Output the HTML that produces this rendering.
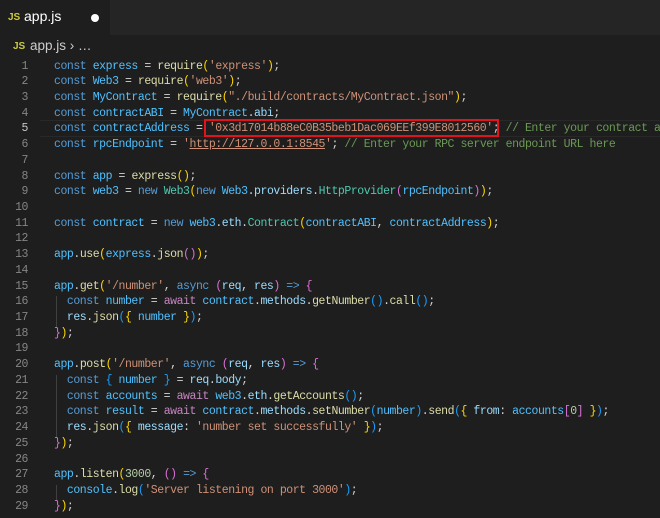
<!DOCTYPE html>
<html><head><style>
body{margin:0;width:660px;height:518px;background:#1e1e1e;overflow:hidden;font-family:"Liberation Sans",sans-serif;position:relative}
#wrap{position:absolute;left:0;top:0;width:660px;height:518px;overflow:hidden}
.tabs{position:absolute;left:0;top:0;width:660px;height:35px;background:#252526}
.tab{position:absolute;left:0;top:0;width:110px;height:35px;background:#1e1e1e}
.js{color:#cbcb41;font-weight:bold;font-size:10px;position:absolute}
.tt{color:#fff;font-size:14px;position:absolute}
.crumb{color:#ccc;font-size:13.5px;position:absolute}
.ln{position:absolute;left:0;width:28px;text-align:right;color:#858585;font-family:"Liberation Mono",monospace;font-size:11.5px;letter-spacing:-0.45px}
.ln.a{color:#c6c6c6}
.c{position:absolute;left:54px;white-space:pre;font-family:"Liberation Mono",monospace;font-size:11.5px;letter-spacing:-0.45px;color:#d4d4d4}
.k{color:#569cd6}.v{color:#4fc1ff}.p{color:#9cdcfe}.f{color:#dcdcaa}.s{color:#ce9178}.m{color:#6a9955}.n{color:#b5cea8}.w{color:#c586c0}.t{color:#4ec9b0}
.b1{color:#ffd700}.b2{color:#da70d6}.b3{color:#179fff}
.g{position:absolute;left:56px;width:1px;background:#404040}
</style></head><body><div id="wrap">
<div class="tabs"><div class="tab">
<span class="js" style="left:8px;top:12px">JS</span><span class="tt" style="left:24px;top:8px">app.js</span>
<div style="position:absolute;left:91px;top:14px;width:8px;height:8px;border-radius:50%;background:#fff"></div></div></div>
<span class="js" style="left:13px;top:41px">JS</span><span class="crumb" style="left:30px;top:38px">app.js &#8250; …</span>
<div style="position:absolute;left:40px;top:120px;width:620px;height:15px;border-top:1px solid #282828;border-bottom:1px solid #282828"></div>
<div id="code"></div>
<div style="position:absolute;left:204px;top:119px;width:295px;height:18px;border:2px solid #e0141e;box-sizing:border-box"></div>
</div>
<script>
var L=[
'<span class="k">const</span> <span class="v">express</span> = <span class="f">require</span><span class="b1">(</span><span class="s">\'express\'</span><span class="b1">)</span>;',
'<span class="k">const</span> <span class="v">Web3</span> = <span class="f">require</span><span class="b1">(</span><span class="s">\'web3\'</span><span class="b1">)</span>;',
'<span class="k">const</span> <span class="v">MyContract</span> = <span class="f">require</span><span class="b1">(</span><span class="s">"./build/contracts/MyContract.json"</span><span class="b1">)</span>;',
'<span class="k">const</span> <span class="v">contractABI</span> = <span class="v">MyContract</span>.<span class="p">abi</span>;',
'<span class="k">const</span> <span class="v">contractAddress</span> = <span class="s">\'0x3d17014b88eC0B35beb1Dac069EEf399E8012560\'</span>; <span class="m">// Enter your contract address here</span>',
'<span class="k">const</span> <span class="v">rpcEndpoint</span> = <span class="s">\'<u>http://127.0.0.1:8545</u>\'</span>; <span class="m">// Enter your RPC server endpoint URL here</span>',
'',
'<span class="k">const</span> <span class="v">app</span> = <span class="f">express</span><span class="b1">()</span>;',
'<span class="k">const</span> <span class="v">web3</span> = <span class="k">new</span> <span class="t">Web3</span><span class="b1">(</span><span class="k">new</span> <span class="v">Web3</span>.<span class="p">providers</span>.<span class="t">HttpProvider</span><span class="b2">(</span><span class="v">rpcEndpoint</span><span class="b2">)</span><span class="b1">)</span>;',
'',
'<span class="k">const</span> <span class="v">contract</span> = <span class="k">new</span> <span class="v">web3</span>.<span class="p">eth</span>.<span class="t">Contract</span><span class="b1">(</span><span class="v">contractABI</span>, <span class="v">contractAddress</span><span class="b1">)</span>;',
'',
'<span class="v">app</span>.<span class="f">use</span><span class="b1">(</span><span class="v">express</span>.<span class="f">json</span><span class="b2">()</span><span class="b1">)</span>;',
'',
'<span class="v">app</span>.<span class="f">get</span><span class="b1">(</span><span class="s">\'/number\'</span>, <span class="k">async</span> <span class="b2">(</span><span class="p">req</span>, <span class="p">res</span><span class="b2">)</span> <span class="k">=&gt;</span> <span class="b2">{</span>',
'  <span class="k">const</span> <span class="v">number</span> = <span class="w">await</span> <span class="v">contract</span>.<span class="p">methods</span>.<span class="f">getNumber</span><span class="b3">()</span>.<span class="f">call</span><span class="b3">()</span>;',
'  <span class="p">res</span>.<span class="f">json</span><span class="b3">(</span><span class="b1">{</span> <span class="v">number</span> <span class="b1">}</span><span class="b3">)</span>;',
'<span class="b2">}</span><span class="b1">)</span>;',
'',
'<span class="v">app</span>.<span class="f">post</span><span class="b1">(</span><span class="s">\'/number\'</span>, <span class="k">async</span> <span class="b2">(</span><span class="p">req</span>, <span class="p">res</span><span class="b2">)</span> <span class="k">=&gt;</span> <span class="b2">{</span>',
'  <span class="k">const</span> <span class="b3">{</span> <span class="v">number</span> <span class="b3">}</span> = <span class="p">req</span>.<span class="p">body</span>;',
'  <span class="k">const</span> <span class="v">accounts</span> = <span class="w">await</span> <span class="v">web3</span>.<span class="p">eth</span>.<span class="f">getAccounts</span><span class="b3">()</span>;',
'  <span class="k">const</span> <span class="v">result</span> = <span class="w">await</span> <span class="v">contract</span>.<span class="p">methods</span>.<span class="f">setNumber</span><span class="b3">(</span><span class="v">number</span><span class="b3">)</span>.<span class="f">send</span><span class="b3">(</span><span class="b1">{</span> <span class="p">from</span>: <span class="v">accounts</span><span class="b2">[</span><span class="n">0</span><span class="b2">]</span> <span class="b1">}</span><span class="b3">)</span>;',
'  <span class="p">res</span>.<span class="f">json</span><span class="b3">(</span><span class="b1">{</span> <span class="p">message</span>: <span class="s">\'number set successfully\'</span> <span class="b1">}</span><span class="b3">)</span>;',
'<span class="b2">}</span><span class="b1">)</span>;',
'',
'<span class="v">app</span>.<span class="f">listen</span><span class="b1">(</span><span class="n">3000</span>, <span class="b2">()</span> <span class="k">=&gt;</span> <span class="b2">{</span>',
'  <span class="v">console</span>.<span class="f">log</span><span class="b3">(</span><span class="s">\'Server listening on port 3000\'</span><span class="b3">)</span>;',
'<span class="b2">}</span><span class="b1">)</span>;'
];
var T=59.5,H=15.72;
var h='';
[[16,2],[21,4],[28,1]].forEach(function(g){h+='<div class="g" style="top:'+(T+(g[0]-1)*H+1)+'px;height:'+(g[1]*H)+'px"></div>';});
for(var i=0;i<L.length;i++){var y=T+i*H;
h+='<div class="ln'+(i==4?' a':'')+'" style="top:'+y+'px">'+(i+1)+'</div><div class="c" style="top:'+y+'px">'+L[i]+'</div>';}
document.getElementById('code').innerHTML=h;
</script>
</body></html>
